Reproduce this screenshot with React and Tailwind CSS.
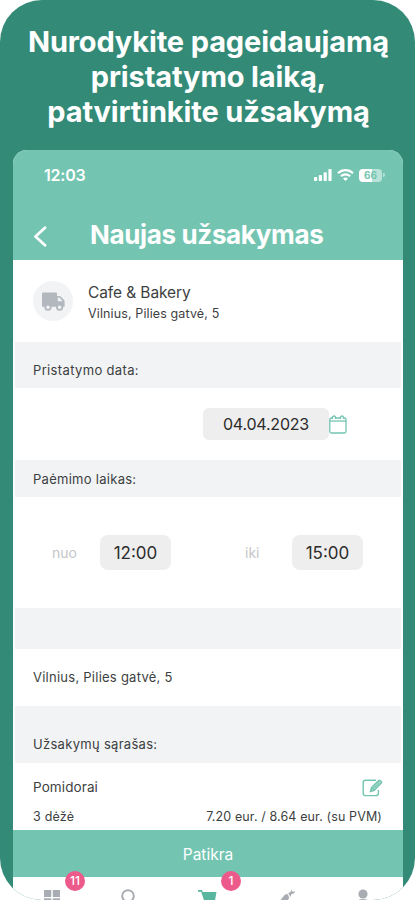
import React from "react";

const SectionBar = ({ className, children }) => (
  <div className={`mx-[2px] shrink-0 bg-[#f1f3f5] px-[18px] text-[13px] leading-4 text-[#3d3f42] ${className}`}>
    {children}
  </div>
);

const TimeBox = ({ children }) => (
  <div className="flex h-[35px] w-[71px] items-center justify-center rounded-lg bg-[#eeeeee] pt-0.5 text-[17px] text-[#2c2c2c]">
    {children}
  </div>
);

const Badge = ({ children, className }) => (
  <span className={`absolute flex size-5 items-center justify-center rounded-full bg-[#ec5a8b] text-[12px] font-medium text-white ${className}`}>
    {children}
  </span>
);

const StatusIcons = () => (
  <div className="flex items-center gap-[5px] text-white">
    <svg width="18" height="12" viewBox="0 0 18 12" fill="currentColor">
      <rect x="0" y="8" width="3.2" height="4" rx="0.8" />
      <rect x="4.8" y="6" width="3.2" height="6" rx="0.8" />
      <rect x="9.6" y="3.3" width="3.2" height="8.7" rx="0.8" />
      <rect x="14.4" y="0" width="3.2" height="12" rx="0.8" />
    </svg>
    <svg width="17" height="12" viewBox="0 0 17 12" fill="none" stroke="currentColor" strokeWidth="2.2">
      <path d="M1 4.3C5.2 0.1 11.8 0.1 16 4.3" />
      <path d="M3.9 7.3C6.5 4.8 10.5 4.8 13.1 7.3" />
      <path d="M8.5 12L6 9.4C7.4 8.2 9.6 8.2 11 9.4Z" fill="currentColor" stroke="none" />
    </svg>
    <div className="flex items-center">
      <div className="flex h-[13px] w-[23px] items-center justify-center rounded-[4px] bg-linear-to-r from-white from-55% to-white/50 to-55% text-[10px] font-bold text-[#73c5b1]">
        66
      </div>
      <div className="ml-px h-1 w-[2px] rounded-r bg-white/50" />
    </div>
  </div>
);

const App = () => (
  <div className="h-[900px] w-[415px] overflow-hidden bg-white font-['Inter',sans-serif]">
    <div className="flex h-full flex-col overflow-hidden rounded-[42px] bg-[#338b77]">
      <h1 className="h-[150px] shrink-0 pt-6 pl-0.5 text-center text-[29px] leading-[35px] font-bold tracking-[-0.14px] whitespace-nowrap text-white">
        Nurodykite pageidaujamą
        <br />
        pristatymo laiką,
        <br />
        patvirtinkite užsakymą
      </h1>

      <div className="mr-3 ml-[13px] flex h-[750px] flex-col overflow-hidden rounded-t-[14px] bg-white">
        <header className="h-[110px] shrink-0 bg-[#73c5b1] text-white">
          <div className="flex h-[50px] items-center justify-between pr-[18px] pl-[31px]">
            <span className="text-[16px] font-semibold tracking-[-0.2px]">12:03</span>
            <StatusIcons />
          </div>
          <div className="flex h-[70px] items-center pb-0.5 pl-5">
            <svg width="14" height="21" viewBox="0 0 14 21" fill="none" stroke="currentColor" strokeWidth="2.8" strokeLinecap="round" strokeLinejoin="round" className="mt-1">
              <path d="M12 1.8L2.5 10.5L12 19.2" />
            </svg>
            <h2 className="ml-[43px] text-[26px] font-bold tracking-[-0.35px] whitespace-nowrap">Naujas užsakymas</h2>
          </div>
        </header>

        <div className="flex h-[82px] shrink-0 items-center pl-5">
          <div className="flex size-10 items-center justify-center rounded-full bg-[#f1f3f5]">
            <svg width="23" height="19" viewBox="0 0 23 19" fill="#b3b8bf">
              <path d="M1 0.5H14Q15 0.5 15 1.5V4H17.5Q18.3 4 19 4.7L22 8Q22.6 8.7 22.6 9.5V14.8H0V1.5Q0 0.5 1 0.5Z" />
              <path d="M15.8 5.6H17.4L20.6 9.2H15.8Z" fill="#f1f3f5" />
              <circle cx="6" cy="15.2" r="2.7" fill="#f1f3f5" stroke="#b3b8bf" strokeWidth="1.8" />
              <circle cx="17.6" cy="15.2" r="2.7" fill="#f1f3f5" stroke="#b3b8bf" strokeWidth="1.8" />
            </svg>
          </div>
          <div className="ml-[15px] pt-[5px] text-[#3d3f42]">
            <div className="text-[15.5px] leading-5 tracking-[-0.1px]">Cafe &amp; Bakery</div>
            <div className="text-[12.5px] leading-[21px] tracking-[0.12px]">Vilnius, Pilies gatvė, 5</div>
          </div>
        </div>

        <SectionBar className="h-[46px] pt-5 tracking-[0.35px]">Pristatymo data:</SectionBar>
        <div className="flex h-[72px] shrink-0 items-center pl-[190px]">
          <div className="flex h-8 w-[126px] items-center justify-center rounded-md bg-[#eeeeee] text-[16px] tracking-[-0.2px] text-[#2c2c2c]">
            04.04.2023
          </div>
          <svg width="18" height="19" viewBox="0 0 18 19" fill="none" stroke="#73c5b1" strokeWidth="1.3">
            <rect x="0.8" y="3" width="16.2" height="15" rx="1.5" />
            <path d="M1 6H17" />
            <path d="M3.5 4V2.5A1.5 1.5 0 0 1 6.5 2.5V4M11.5 4V2.5A1.5 1.5 0 0 1 14.5 2.5V4" fill="white" />
          </svg>
        </div>

        <SectionBar className="h-[37px] pt-[11px] tracking-[0.28px]">Paėmimo laikas:</SectionBar>
        <div className="flex h-[111px] shrink-0 items-center text-[14px] text-[#c4c6c8]">
          <span className="w-[87px] pl-[39px]">nuo</span>
          <TimeBox>12:00</TimeBox>
          <span className="ml-[74px] w-[47px]">iki</span>
          <TimeBox>15:00</TimeBox>
        </div>

        <SectionBar className="h-[41px]" />
        <div className="flex h-[57px] shrink-0 items-center pt-px pl-5 text-[13px] tracking-[0.25px] text-[#3d3f42]">Vilnius, Pilies gatvė, 5</div>
        <SectionBar className="h-[57px] pt-[30px] tracking-[0.3px]">Užsakymų sąrašas:</SectionBar>

        <div className="h-[67px] shrink-0 px-5 pt-3.5 text-[#3d3f42]">
          <div className="flex h-5 items-center justify-between text-[13.5px] tracking-[0.1px]">
            Pomidorai
            <svg width="21" height="18" viewBox="0 0 21 18" fill="none" stroke="#73c5b1" strokeWidth="1.4" className="mt-0.5">
              <path d="M14 1.2H3.5Q1.2 1.2 1.2 3.5V14.2Q1.2 16.6 3.5 16.6H14Q16.4 16.6 16.4 14.2V11" />
              <path d="M8.5 12.5L9.5 8.7L16.7 1.5Q17.4 0.9 18.1 1.5L19.3 2.7Q20 3.4 19.3 4.1L12.2 11.4Z" fill="#a5dacb" />
              <path d="M15 3.2L17.6 5.8M9.5 8.7L12.2 11.4M11.3 9.5L16.5 4.4" strokeWidth="1" />
            </svg>
          </div>
          <div className="mt-2.5 mr-px flex items-center justify-between text-[12.5px] leading-5">
            <span className="tracking-[0.2px]">3 dėžė</span>
            <span className="tracking-[0.12px]">7.20 eur. / 8.64 eur. (su PVM)</span>
          </div>
        </div>

        <div className="flex h-[47px] shrink-0 items-center justify-center bg-[#73c5b1] pt-0.5 text-[15.5px] text-white">Patikra</div>

        <nav className="relative flex h-[23px] shrink-0 pt-3 text-[#a9adb3]">
          <Badge className="-top-[6px] left-[52px]">11</Badge>
          <Badge className="-top-[6px] left-[208px]">1</Badge>
          <svg width="18" height="18" viewBox="0 0 18 18" fill="currentColor" className="ml-[30px] shrink-0">
            <path d="M1 1H8.3V8H1ZM9.8 1H17V8H9.8ZM1 9.3H8.3V17H1ZM9.8 9.3H17V17H9.8Z" />
          </svg>
          <svg width="18" height="18" viewBox="0 0 18 18" fill="none" stroke="currentColor" strokeWidth="2" className="ml-[60px] shrink-0">
            <circle cx="7" cy="7" r="5.8" />
            <path d="M11 11L17 17" />
          </svg>
          <svg width="22" height="20" viewBox="0 0 22 20" fill="#5ab79f" className="ml-[58px] shrink-0">
            <path d="M1 1H5L5.7 3H19.5L18 11.5H7L4.2 2.8H1Z" />
          </svg>
          <svg width="18" height="18" viewBox="0 0 18 18" fill="currentColor" className="ml-[59px] shrink-0">
            <path d="M14 0.5L12.3 3L10.2 4.3L12.4 8L13.3 5.2L16.2 4.2L17.2 2.2L15 2.8L14 2.2ZM6.5 6L9.3 4.8L11.3 8.5L9 13H1Z" />
          </svg>
          <svg width="18" height="20" viewBox="0 0 18 20" fill="currentColor" className="ml-[58px] shrink-0">
            <circle cx="9" cy="5" r="4.6" />
            <path d="M0 18Q1 10 9 10Q17 10 18 18Z" />
          </svg>
        </nav>
      </div>
    </div>
  </div>
);

export default App;
